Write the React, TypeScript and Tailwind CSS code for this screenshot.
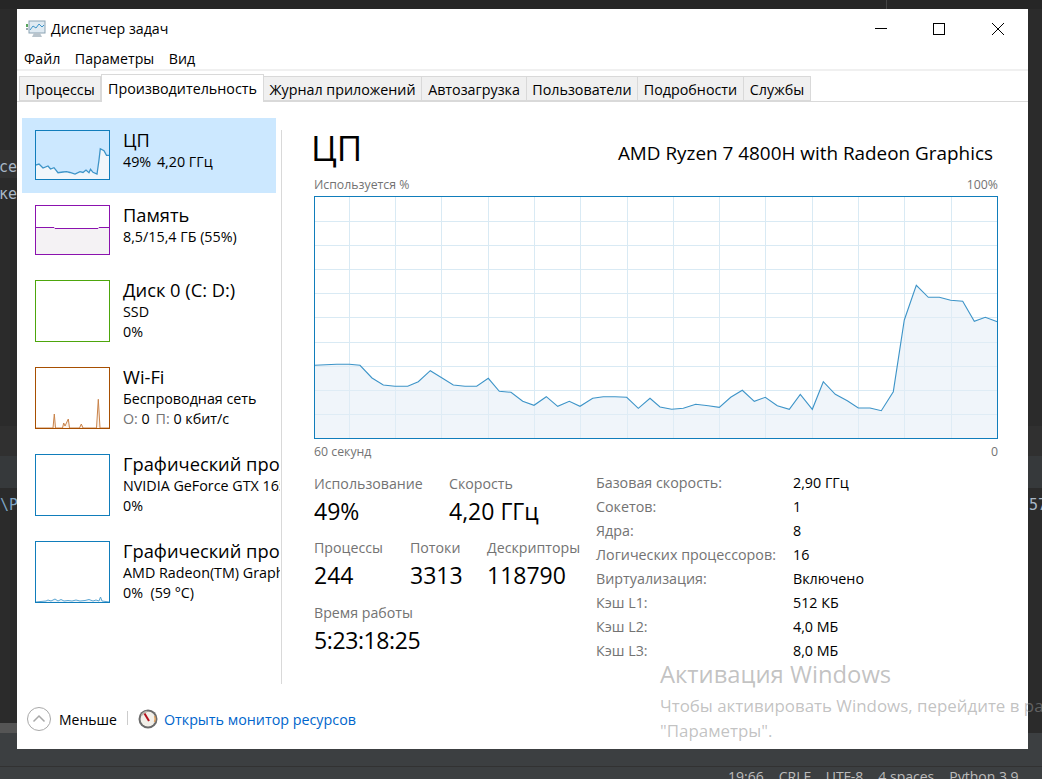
import type { ReactNode } from "react";

const cpuLine =
  "314.7,365.3 336.7,364.3 349.3,364.3 360,365.3 372,378 383.3,385 395,386.3 407.7,386.3 418.3,381.7 430.3,370.7 441.7,377.7 453.3,385 465,386.3 476.7,386.3 488.3,378.3 499.3,391.3 511,392.3 522.7,401.3 534,405.3 546.3,396.7 557.7,406.3 569.3,401.3 580,406.3 592.7,398.3 603.3,396.7 615,396.7 626.7,397.3 638.3,408.3 650,398.3 660,407 671.7,409.3 683.3,408.3 695.7,404.3 708.3,405.7 719.3,407.3 730.7,397.3 742.3,390.3 754.3,401.3 765.3,397.3 777.3,405.7 789.3,409.3 800.3,394.3 812.3,409.3 823.3,381.7 835.3,394.3 847.3,400.7 858.3,408 870,408 881.3,410.7 893.3,391.7 904.3,320 916.3,285.3 928.3,297.3 939.3,297.3 950.7,300.3 962.7,301.3 974.3,321.3 985.3,317.3 997.3,321.7";

const gridX = [349.5, 395.5, 441.5, 488.5, 534.5, 580.5, 627.5, 673.5, 719.5, 765.5, 812.5, 858.5, 904.5, 951.5];
const gridY = [221.5, 245.5, 269.5, 293.5, 317.5, 342.5, 366.5, 390.5, 414.5];

function Thumb({ h, color, children }: { h: number; color: string; children?: ReactNode }) {
  return (
    <svg width="75" height={h} viewBox={`0 0 75 ${h}`} className="block shrink-0">
      {children}
      <rect x="0.5" y="0.5" width="74" height={h - 1} fill="none" stroke={color} />
    </svg>
  );
}

function CpuThumb() {
  const pts = "0.5,35 4,34 8,38 13,36 15.5,39 19,37.7 23,42.7 28,42 31.5,41.7 35,42.5 40,44 45,41.7 48,42.5 51,40 54,42.7 55.5,39.3 58,42.3 62,44 64,30 65.3,18.7 69,20.7 71.5,25.3 74.5,25.3";
  return (
    <Thumb h={50} color="#117dbb">
      <polygon points={`0.5,49.5 ${pts} 74.5,49.5`} fill="#f1f6fa" />
      <polyline points={pts} fill="none" stroke="#3d94c8" strokeWidth="1.3" />
    </Thumb>
  );
}

function MemThumb() {
  return (
    <Thumb h={50} color="#8b12ae">
      <polygon points="0.5,22.5 19,22.5 19,23.5 64,23.5 64,22.5 74.5,22.5 74.5,49.5 0.5,49.5" fill="#f4f2f4" />
      <polyline points="0.5,22.5 19,22.5 20,23.5 63,23.5 64,22.5 74.5,22.5" fill="none" stroke="#8b12ae" />
    </Thumb>
  );
}

function WifiThumb() {
  const pts = "0.5,61 18,61 19.3,47 20.5,61 27.5,61 28.7,56 30,59 33.3,52 34.5,61 44.5,61 46.3,57 48,61 61.5,61 63.3,32.3 65,61 74.5,61";
  return (
    <Thumb h={62} color="#a74f01">
      <polygon points={pts} fill="#fcf3eb" />
      <polyline points={pts} fill="none" stroke="#c9834a" />
    </Thumb>
  );
}

function GpuThumb() {
  const pts = "0.5,61 11,60 13,59 16,60 20,58 23,60 26,58.5 29,60 33,59.5 37,60 41,59 45,60 50,59.5 54,58.5 58,60 61,59 64,60 65.5,56 67,60 74.5,61";
  return (
    <Thumb h={62} color="#117dbb">
      <polyline points={pts} fill="#eef5fa" stroke="#5aa5d2" />
    </Thumb>
  );
}

const items: { key: string; h: string; thumb: ReactNode; title: string; lines: ReactNode[]; active?: boolean }[] = [
  { key: "cpu", h: "h-[75px] w-[254px] bg-[#cce8ff]", thumb: <CpuThumb />, title: "ЦП", lines: [<>49% <span className="ml-[2px]">4,20 ГГц</span></>], active: true },
  { key: "mem", h: "h-[75px] w-[258px]", thumb: <MemThumb />, title: "Память", lines: ["8,5/15,4 ГБ (55%)"] },
  { key: "disk", h: "h-[87px] w-[258px]", thumb: <Thumb h={62} color="#4da60c" />, title: "Диск 0 (C: D:)", lines: ["SSD", "0%"] },
  {
    key: "wifi",
    h: "h-[87px] w-[258px]",
    thumb: <WifiThumb />,
    title: "Wi-Fi",
    lines: ["Беспроводная сеть", <><span className="text-[#737373]">О:</span> 0 <span className="ml-[2px] text-[#737373]">П:</span> 0 кбит/с</>],
  },
  { key: "gpu0", h: "h-[87px] w-[258px]", thumb: <Thumb h={62} color="#117dbb" />, title: "Графический процессор 0", lines: ["NVIDIA GeForce GTX 1650", "0%"] },
  { key: "gpu1", h: "h-[87px] w-[258px]", thumb: <GpuThumb />, title: "Графический процессор 1", lines: ["AMD Radeon(TM) Graphics", "0%  (59 °C)"] },
];

const tabs = [
  { label: "Процессы", w: "w-[82px]" },
  { label: "Производительность", w: "w-[163px]", active: true },
  { label: "Журнал приложений", w: "w-[158px]" },
  { label: "Автозагрузка", w: "w-[105px]" },
  { label: "Пользователи", w: "w-[111px]" },
  { label: "Подробности", w: "w-[106px]" },
  { label: "Службы", w: "w-[67px]" },
];

const specs = [
  ["Базовая скорость:", "2,90 ГГц"],
  ["Сокетов:", "1"],
  ["Ядра:", "8"],
  ["Логических процессоров:", "16"],
  ["Виртуализация:", "Включено"],
  ["Кэш L1:", "512 КБ"],
  ["Кэш L2:", "4,0 МБ"],
  ["Кэш L3:", "8,0 МБ"],
];

function Stat({ label, value, w, tight }: { label: string; value: string; w: string; tight?: boolean }) {
  return (
    <div className={w}>
      <div className="h-[19px] text-[14.2px] leading-[19px] text-[#737373] whitespace-nowrap">{label}</div>
      <div className={`mt-[1px] h-[34px] text-[23px] leading-[34px] text-black whitespace-nowrap ${tight ? "tracking-[-0.4px]" : ""}`}>{value}</div>
    </div>
  );
}

function AppIcon() {
  return (
    <svg width="20" height="20" viewBox="0 0 20 20" className="shrink-0">
      <rect x="3" y="2" width="16" height="12" fill="#dfeaf2" stroke="#8ba3b3" />
      <polyline points="4,11 7,7 10,9 13,5 16,8 18,6" fill="none" stroke="#3d94c8" />
      <rect x="0" y="5" width="2" height="3" fill="#58a55c" />
      <rect x="0" y="9" width="2" height="2" fill="#9aa7b0" />
      <path d="M8 14h6l2 4H6z" fill="#b9c4cc" />
    </svg>
  );
}

function MonitorIcon() {
  return (
    <svg width="20" height="20" viewBox="0 0 20 20" className="shrink-0">
      <circle cx="10" cy="10" r="9.5" fill="#6b6b6b" />
      <circle cx="10" cy="10" r="7.5" fill="#f2efe8" />
      <path d="M3.5 6.5A7.5 7.5 0 0 1 9 2.6" fill="none" stroke="#b9b4aa" strokeWidth="1.5" />
      <path d="M16.6 7A7.5 7.5 0 0 1 16.5 13" fill="none" stroke="#e2a15e" strokeWidth="1.5" />
      <path d="M6.5 4.5 L11 12" stroke="#b2101c" strokeWidth="2" />
    </svg>
  );
}

export default function App() {
  return (
    <div className="relative h-[779px] w-[1042px] overflow-hidden bg-[#2b2b2b] font-['Open_Sans',sans-serif]">
      {/* IDE behind the window */}
      <div className="absolute inset-x-0 top-0 h-[9px] bg-[#262626]" />
      <div className="absolute left-[886px] top-0 h-[9px] w-px bg-[#444444]" />
      <div className="absolute left-0 top-[150px] h-[28px] w-[17px] bg-[#323232]" />
      <div className="absolute inset-x-0 top-[426px] h-[30px] bg-[#303030]" />
      <div className="absolute inset-x-0 top-[456px] h-[32px] bg-[#36393b]" />
      <div className="absolute left-0 top-[723px] h-[10px] w-[17px] bg-[#555555]" />
      <div className="absolute inset-x-0 top-[733px] h-[46px] bg-[#3c3f41]" />
      <div className="absolute inset-x-0 top-[766px] h-px bg-[#323232]" />
      <div className="absolute left-[-1px] top-[157px] font-['DejaVu_Sans_Mono',monospace] text-[15px] leading-[20px] text-[#a9b7c6]">ce</div>
      <div className="absolute left-[-1px] top-[184px] font-['DejaVu_Sans_Mono',monospace] text-[15px] leading-[20px] text-[#a9b7c6]">ке</div>
      <div className="absolute left-0 top-[495px] font-['DejaVu_Sans_Mono',monospace] text-[15px] leading-[20px] text-[#7fa5c4]">\P</div>
      <div className="absolute left-[1029px] top-[495px] font-['DejaVu_Sans_Mono',monospace] text-[15px] leading-[20px] text-[#a9b7c6]">57</div>
      <div className="absolute left-[728px] top-[767px] flex gap-[15px] text-[14px] leading-[19px] text-[#bbbbbb] whitespace-nowrap">
        <span>19:66</span>
        <span>CRLF</span>
        <span>UTF-8</span>
        <span>4 spaces</span>
        <span>Python 3.9</span>
      </div>

      {/* window */}
      <div className="relative ml-[17px] top-[9px] flex h-[740px] w-[1011px] flex-col bg-white text-black">
        <div className="flex h-[38px] shrink-0 items-center pl-[9px] pt-[2px]">
          <AppIcon />
          <span className="ml-[5px] text-[14.2px]">Диспетчер задач</span>
          <div className="ml-auto flex items-center">
            <svg width="12" height="12" viewBox="0 0 12 12" className="mr-[46px]"><path d="M0 5.5h12" stroke="#000" /></svg>
            <svg width="12" height="12" viewBox="0 0 12 12" className="mr-[47px]"><rect x="0.5" y="0.5" width="11" height="11" fill="none" stroke="#000" /></svg>
            <svg width="12" height="12" viewBox="0 0 12 12" className="mr-[24px]"><path d="M0 0l12 12M12 0L0 12" stroke="#000" /></svg>
          </div>
        </div>
        <div className="flex h-[22px] shrink-0 items-center gap-[14.5px] pl-[7px] pt-[2px] text-[14.2px]">
          <span>Файл</span>
          <span>Параметры</span>
          <span>Вид</span>
        </div>
        <div className="h-[2px] shrink-0 bg-[#f0f0f0]" />

        <div className="flex h-[31px] shrink-0 items-end border-b border-[#d9d9d9] pl-[2px]">
          {tabs.map((t) =>
            t.active ? (
              <div key={t.label} className={`${t.w} relative top-px z-10 flex h-[28px] items-start justify-center border border-b-0 border-[#d9d9d9] bg-white pt-[3px] text-[14.3px] whitespace-nowrap`}>
                {t.label}
              </div>
            ) : (
              <div key={t.label} className={`${t.w} flex h-[25px] items-center justify-center border-y border-r border-[#d9d9d9] bg-[#f0f0f0] pt-[2px] text-[14.3px] whitespace-nowrap first:border-l`}>
                {t.label}
              </div>
            )
          )}
        </div>

        <div className="flex min-h-0 flex-1">
          {/* sidebar */}
          <div className="ml-[5px] mt-[16px] w-[258px] shrink-0 overflow-hidden">
            {items.map((it) => (
              <div key={it.key} className={`${it.h} flex pl-[13px] pt-[12px]`}>
                {it.thumb}
                <div className="ml-[13px] min-w-0">
                  <div className="mt-[-2px] text-[18.3px] leading-[24px] whitespace-nowrap">{it.title}</div>
                  {it.lines.map((l, i) => (
                    <div key={i} className="text-[14.3px] leading-[20px] whitespace-pre">{l}</div>
                  ))}
                </div>
              </div>
            ))}
          </div>
          <div className="ml-[1px] mt-[28px] h-[554px] w-px shrink-0 bg-[#d9d9d9]" />

          {/* details */}
          <div className="ml-[32px] flex w-[684px] shrink-0 flex-col pt-[22px]">
            <div className="flex h-[50px] items-center justify-between pr-[5px]">
              <span className="-ml-[3px] -mt-[2px] text-[35px] leading-[50px]">ЦП</span>
              <span className="mt-[8px] text-[18.9px]">AMD Ryzen 7 4800H with Radeon Graphics</span>
            </div>
            <div className="mt-[1px] mb-[1px] flex h-[20px] items-center justify-between text-[12.3px] text-[#737373]">
              <span>Используется %</span>
              <span>100%</span>
            </div>
            <svg width="684" height="243" viewBox="314 196 684 243" className="block">
              {gridX.map((x) => (
                <line key={x} x1={x} x2={x} y1="196" y2="439" stroke="#d9eaf4" />
              ))}
              {gridY.map((y) => (
                <line key={y} x1="314" x2="998" y1={y} y2={y} stroke="#d9eaf4" />
              ))}
              <polygon points={`314.5,438.5 ${cpuLine} 997.5,438.5`} fill="#e4edf5" fillOpacity="0.55" />
              <polyline points={cpuLine} fill="none" stroke="#3d94c8" strokeWidth="1.1" />
              <rect x="314.5" y="196.5" width="683" height="242" fill="none" stroke="#117dbb" />
            </svg>
            <div className="flex h-[26px] items-center justify-between text-[12.3px] text-[#737373]">
              <span>60 секунд</span>
              <span>0</span>
            </div>

            <div className="mt-[6px] flex">
              <div className="w-[282px] shrink-0 pt-[3px]">
                <div className="flex">
                  <Stat label="Использование" value="49%" w="w-[135px]" />
                  <Stat label="Скорость" value="4,20 ГГц" w="w-[147px]" />
                </div>
                <div className="mt-[10px] flex">
                  <Stat label="Процессы" value="244" w="w-[96px]" />
                  <Stat label="Потоки" value="3313" w="w-[77px]" />
                  <Stat label="Дескрипторы" value="118790" w="w-[109px]" />
                </div>
                <div className="mt-[11px]">
                  <Stat label="Время работы" value="5:23:18:25" w="w-[200px]" tight />
                </div>
              </div>
              <div className="grid grid-cols-[197px_auto] auto-rows-[24px] text-[14.3px] leading-[24px]">
                {specs.map(([k, v]) => [
                  <div key={k} className="text-[#737373] whitespace-nowrap">{k}</div>,
                  <div key={v}>{v}</div>,
                ])}
              </div>
            </div>
          </div>
        </div>

        {/* footer */}
        <div className="flex h-[65px] shrink-0 items-start pl-[10px] pt-[23px] text-[14.2px]">
          <svg width="24" height="24" viewBox="0 0 24 24" className="shrink-0">
            <circle cx="12" cy="12" r="11.5" fill="#fff" stroke="#a8a8a8" />
            <path d="M6.5 14.5 12 9l5.5 5.5" fill="none" stroke="#a8a8a8" strokeWidth="1.5" />
          </svg>
          <span className="ml-[8px] mt-[1px] text-[14px] leading-[24px]">Меньше</span>
          <div className="ml-[10px] mt-[4px] h-[14px] w-px bg-[#cccccc]" />
          <div className="ml-[10px] mt-[2px] shrink-0"><MonitorIcon /></div>
          <span className="ml-[6px] mt-[1px] text-[14.3px] leading-[24px] text-[#0066cc]">Открыть монитор ресурсов</span>
        </div>
      </div>

      {/* activation watermark */}
      <div className="absolute left-[660px] top-[658px] text-[#8f8f8f]/55 whitespace-nowrap">
        <div className="text-[23.8px] leading-[32px]">Активация Windows</div>
        <div className="mt-[3px] text-[16.9px] leading-[25px]">Чтобы активировать Windows, перейдите в раздел</div>
        <div className="text-[16.9px] leading-[25px]">"Параметры".</div>
      </div>
    </div>
  );
}
